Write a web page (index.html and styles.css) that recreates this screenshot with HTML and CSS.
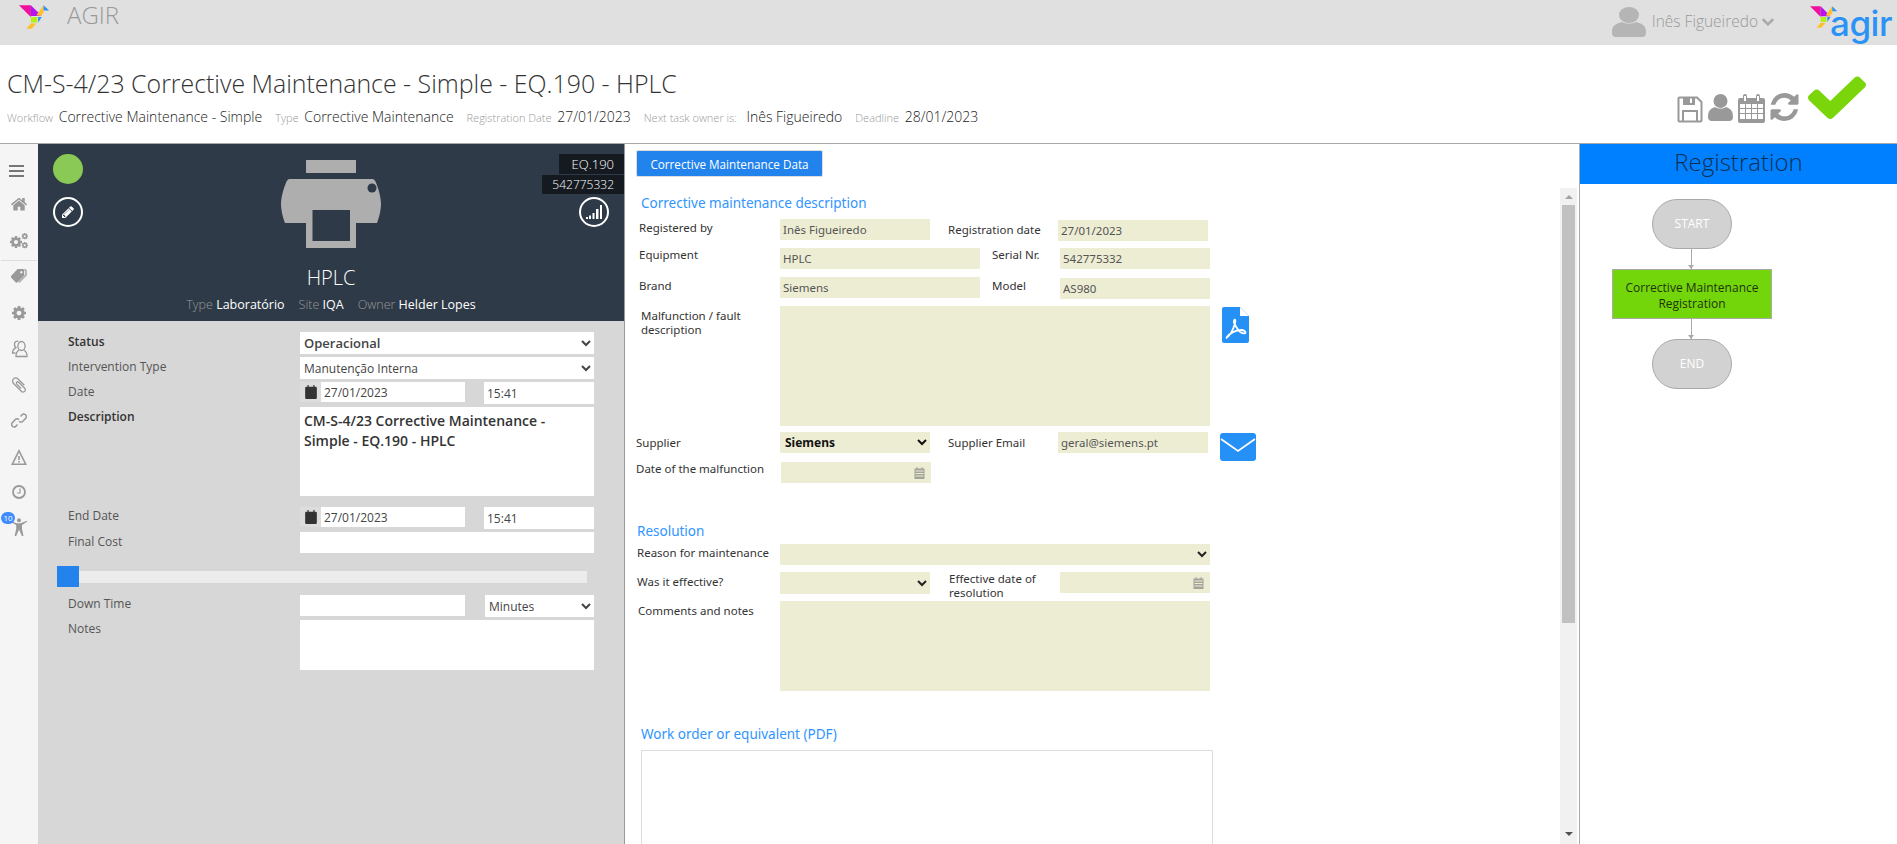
FILE: index.html
```
<!DOCTYPE html>
<html lang="pt">
<head>
<meta charset="utf-8">
<title>AGIR</title>
<link rel="stylesheet" href="styles.css">
</head>
<body>
<svg class="defs" aria-hidden="true">
  <symbol id="bird" viewBox="8 3 34 28">
    <polygon fill="#f0109c" points="8,4 21,4 21,17"/>
    <polygon fill="#b414f0" points="21,4 33,16 21,16"/>
    <polygon fill="#ffc02e" points="27,15 35,4 35,12 32,16"/>
    <polygon fill="#2a93f5" points="35,4 41,10 35,10"/>
    <polygon fill="#b4f014" points="21,17 28,17 28,23 21,23"/>
    <polygon fill="#2a93f5" points="29,17 33,17 29,23"/>
    <polygon fill="#ffc02e" points="16,30 21,24 27,24 22,30"/>
  </symbol>
  <symbol id="chev" viewBox="130 350 1540 1220"><path d="M1683 808l-742 741q-19 19-45 19t-45-19l-742-741q-19-19-19-45.5t19-45.5l166-165q19-19 45-19t45 19l531 531 531-531q19-19 45-19t45 19l166 165q19 19 19 45.5t-19 45.5z"/></symbol>
  <symbol id="home" viewBox="90 200 1610 1340"><path d="M1472 992v480q0 26-19 45t-45 19h-384v-384h-256v384h-384q-26 0-45-19t-19-45v-480q0-1 .5-3t.5-3l575-474 575 474q1 2 1 6zm223-69l-62 74q-8 9-21 11h-3q-13 0-21-7l-692-577-692 577q-12 8-24 7-13-2-21-11l-62-74q-8-10-7-23.5t11-21.5l719-599q32-26 76-26t76 26l244 204v-195q0-14 9-23t23-9h192q14 0 23 9t9 23v408l219 182q10 8 11 21.5t-7 23.5z"/></symbol>
  <symbol id="cog" viewBox="128 128 1536 1536"><path d="M1152 896q0-106-75-181t-181-75-181 75-75 181 75 181 181 75 181-75 75-181zm512-109v222q0 12-8 23t-20 13l-185 28q-19 54-39 91 35 50 107 138 10 12 10 25t-9 23q-27 37-99 108t-94 71q-12 0-26-9l-138-108q-44 23-91 38-16 136-29 186-7 28-36 28h-222q-14 0-24.5-8.5t-11.5-21.5l-28-184q-49-16-90-37l-141 107q-10 9-25 9-14 0-25-11-126-114-165-168-7-10-7-23 0-12 8-23 15-21 51-66.5t54-70.5q-27-50-41-99l-183-27q-13-2-21-12.5t-8-23.5v-222q0-12 8-23t19-13l186-28q14-46 39-92-40-57-107-138-10-12-10-24 0-10 9-23 26-36 98.5-107.5t94.5-71.5q13 0 26 10l138 107q44-23 91-38 16-136 29-186 7-28 36-28h222q14 0 24.5 8.5t11.5 21.5l28 184q49 16 90 37l142-107q9-9 24-9 13 0 25 10 129 119 165 170 7 8 7 22 0 12-8 23-15 21-51 66.5t-54 70.5q26 50 41 98l183 28q13 2 21 12.5t8 23.5z"/></symbol>
  <symbol id="clip" viewBox="200 130 1400 1530"><path d="M1596 1385q0 117-79 196t-196 79q-135 0-235-100l-777-776q-113-115-113-271 0-159 110-270t269-111q158 0 273 113l605 606q10 10 10 22 0 16-30.5 46.5t-46.5 30.5q-13 0-23-10l-606-607q-79-77-181-77-106 0-179 75t-73 181q0 105 76 181l776 777q63 63 145 63 64 0 106-42t42-106q0-82-63-145l-581-581q-26-24-60-24-29 0-48 19t-19 48q0 32 25 59l410 410q10 10 10 22 0 16-31 47t-47 31q-12 0-22-10l-410-410q-63-61-63-149 0-82 57-139t139-57q88 0 149 63l581 581q100 98 100 235z"/></symbol>
  <symbol id="cal" viewBox="0 0 10 12"><path d="M2 0h1v1.500h4V0h1v1.500h1a1 1 0 0 1 1 1V11a1 1 0 0 1-1 1H1a1 1 0 0 1-1-1V2.500a1 1 0 0 1 1-1h1z"/></symbol>
  <symbol id="calm" viewBox="0 0 10 12"><path d="M2 0h1v1.500h4V0h1v1.500h2V12H0V1.500h2zM1 3.500v1h8v-1zM1 6v1h8V6zM1 8.500v1h8v-1z" fill-rule="evenodd"/></symbol>
</svg>

<header class="topbar">
  <svg class="logo-bird"><use href="#bird"/></svg>
  <span class="app-name">AGIR</span>
  <div class="spacer"></div>
  <svg class="top-user" viewBox="0 0 34 30"><ellipse cx="17" cy="8" rx="10" ry="8"/><path d="M0 25c0-6 3-8 10-10 4 2 10 2 14 0 7 2 10 4 10 10 0 3-1 5-4 5H4c-3 0-4-2-4-5z"/></svg>
  <span class="user-name">Inês Figueiredo</span>
  <svg class="top-chev"><use href="#chev"/></svg>
  <div class="brand">
    <svg class="brand-bird"><use href="#bird"/></svg>
    <span class="brand-text">agir</span>
  </div>
</header>

<section class="pagehead">
  <div class="headtext">
    <h1 class="title">CM-S-4/23 Corrective Maintenance - Simple - EQ.190 - HPLC</h1>
    <div class="metaline">
      <span class="metaitem"><small>Workflow</small> Corrective Maintenance - Simple</span>
      <span class="metaitem"><small>Type</small> Corrective Maintenance</span>
      <span class="metaitem"><small>Registration Date</small> 27/01/2023</span>
      <span class="metaitem metanext"><small>Next task owner is:</small> Inês Figueiredo</span>
      <span class="metaitem"><small>Deadline</small> 28/01/2023</span>
    </div>
  </div>
  <div class="actions">
    <svg class="act-save" viewBox="0 0 26 27"><path class="stroke2" d="M2.500 1.500H20L24.500 6v18.500a1 1 0 0 1-1 1h-21a1 1 0 0 1-1-1v-22a1 1 0 0 1 1-1z"/><path d="M6 2v7h12V2h-3v5h-2V2zM5 14h16v11h-2v-9H7v9H5z"/></svg>
    <svg class="act-user" viewBox="0 0 25 27"><ellipse cx="12.500" cy="7" rx="7" ry="7"/><path d="M0 23c0-6 2-8 7-10 3 2 8 2 11 0 5 2 7 4 7 10 0 2-1 4-4 4H4c-3 0-4-2-4-4z"/></svg>
    <svg class="act-cal" viewBox="0 0 27 29"><path d="M2 4h3V2a2 2 0 0 1 4 0v2h9V2a2 2 0 0 1 4 0v2h3a2 2 0 0 1 2 2v21a2 2 0 0 1-2 2H2a2 2 0 0 1-2-2V6a2 2 0 0 1 2-2z"/><path class="white" d="M2 10h5v4H2zM8 10h5v4H8zM14 10h5v4h-5zM20 10h5v4h-5zM2 15h5v4H2zM8 15h5v4H8zM14 15h5v4h-5zM20 15h5v4h-5zM2 20h5v5H2zM8 20h5v5H8zM14 20h5v5h-5zM20 20h5v5h-5zM6 2h2v5H6zM19 2h2v5h-2z"/></svg>
    <svg class="act-sync" viewBox="0 0 1536 1536"><path d="M1511 928q0 5-1 7-64 268-268 434.500t-478 166.500q-146 0-282.500-55t-243.500-157l-129 129q-19 19-45 19t-45-19-19-45v-448q0-26 19-45t45-19h448q26 0 45 19t19 45-19 45l-137 137q71 66 161 102t187 36q134 0 250-65t186-179q11-17 53-117 8-23 30-23h192q13 0 22.500 9.500t9.500 22.500zm25-800v448q0 26-19 45t-45 19h-448q-26 0-45-19t-19-45 19-45l138-138q-148-137-349-137-134 0-250 65t-186 179q-11 17-53 117-8 23-30 23h-199q-13 0-22.500-9.500t-9.500-22.500v-7q65-268 270-434.500t480-166.500q146 0 284 55.500t245 156.500l130-129q19-19 45-19t45 19 19 45z"/></svg>
    <svg class="act-check" viewBox="121 262 1550 1260" preserveAspectRatio="none"><path d="M1671 566q0 40-28 68l-724 724-136 136q-28 28-68 28t-68-28l-136-136-362-362q-28-28-28-68t28-68l136-136q28-28 68-28t68 28l294 295 656-657q28-28 68-28t68 28l136 136q28 28 28 68z"/></svg>
  </div>
</section>

<main class="workspace">
  <nav class="sidebar">
    <div class="navitem"><svg class="nav-menu" viewBox="0 0 15 12"><path d="M0 0h15v2H0zM0 5h15v2H0zM0 10h15v2H0z"/></svg></div>
    <div class="navitem"><svg class="nav-16"><use href="#home"/></svg></div>
    <div class="navitem"><svg class="nav-gears" viewBox="0 0 18 16"><use href="#cog" x="0" y="3" width="12" height="12"/><use href="#cog" x="11.500" y="0" width="6.500" height="6.500"/><use href="#cog" x="11.500" y="9" width="6.500" height="6.500"/></svg></div>
    <div class="navrule"></div>
    <div class="navitem"><svg class="nav-16" viewBox="0 0 17 15"><path d="M9 0h6a2 2 0 0 1 2 2v5l-8 8-1.500-1.500L15 6V3L14 1z" opacity=".7"/><path d="M7 0h5a2 2 0 0 1 2 2v5l-7.500 7.500a1 1 0 0 1-1.400 0L0 9a1 1 0 0 1 0-1.400zM11 2.200a1.300 1.300 0 1 0 .01 0z" fill-rule="evenodd"/></svg></div>
    <div class="navitem"><svg class="nav-14"><use href="#cog"/></svg></div>
    <div class="navitem"><svg class="nav-users outline" viewBox="0 0 17 18"><ellipse cx="10.500" cy="6" rx="3.600" ry="4.500"/><path d="M8 10c-1 1-3 2-3 5v1.500h11V15c0-3-2-4-3-5"/><path d="M7.500 1.500C5 .5 3 2.500 3.500 5c.2 1 .7 2 1.500 2.700-2 1-3.500 2.500-3.500 5.300h3"/></svg></div>
    <div class="navitem"><svg class="nav-clip"><use href="#clip"/></svg></div>
    <div class="navitem"><svg class="nav-link outline" viewBox="0 0 16 17"><path d="M9.500 4.500l1.800-2a2.600 2.600 0 0 1 3.600 3.600l-3 3.200a2.600 2.600 0 0 1-3.800 0"/><path d="M6.500 12.500l-1.800 2a2.600 2.600 0 0 1-3.600-3.600l3-3.200a2.600 2.600 0 0 1 3.800 0"/></svg></div>
    <div class="navitem"><svg class="nav-warn" viewBox="0 0 16 16"><path d="M8 0l8 16H0zM8 3.500L2.500 14.500h11zM7.200 7h1.600v4H7.200zM7.200 12h1.600v1.500H7.200z" fill-rule="evenodd"/></svg></div>
    <div class="navitem"><svg class="nav-14 outline thick" viewBox="0 0 14 14"><circle cx="7" cy="7" r="6"/><path d="M8 3.500V8H5" class="thin"/></svg></div>
    <div class="navitem navperson">
      <svg class="nav-person" viewBox="0 0 16 18"><circle cx="8" cy="2.300" r="2"/><path d="M0 3l5.500 2.200h4L16 2.800v1L11 7v4l1.500 7h-1.600L8 11.500 5.200 18H3.600L5.200 11V7L0 4z"/></svg>
      <span class="badge">10</span>
    </div>
  </nav>

  <aside class="assetpane">
    <div class="asset">
      <div class="asset-left">
        <span class="status-dot"></span>
        <span class="ring"><svg class="ring-pen" viewBox="0 0 1792 1792"><path d="M491 1536l91-91-235-235-91 91v107h128v128h107zm523-928q0-22-22-22-10 0-17 7l-542 542q-7 7-7 17 0 22 22 22 10 0 17-7l542-542q7-7 7-17zm-54-192l416 416-832 832h-416v-416zm683 96q0 53-37 90l-166 166-416-416 166-165q36-38 90-38 53 0 91 38l235 234q37 39 37 91z"/></svg></span>
      </div>
      <div class="asset-center">
        <svg class="printer" viewBox="0 0 100 88">
          <path class="pr-body" d="M25 0h50v13H25zM9 19H91c2.500 0 3.500 2 4.500 5C99 33 100 40 100 44 100 50 98 58 96 63H75V88H25V63H4C2 58 0 50 0 44 0 40 1 33 4.500 24 5.500 21 6.500 19 9 19z"/>
          <path class="pr-hole" d="M31.500 50H69v31H31.500z"/>
          <circle class="pr-hole" cx="91" cy="28" r="4.500"/>
        </svg>
        <div class="asset-name">HPLC</div>
        <div class="asset-meta"><span><i>Type</i> Laboratório</span><span><i>Site</i> IQA</span><span><i>Owner</i> Helder Lopes</span></div>
      </div>
      <div class="asset-right">
        <span class="tag tag-eq">EQ.190</span>
        <span class="tag tag-serial">542775332</span>
        <span class="ring ring-right"><svg class="ring-signal" viewBox="0 0 16 14"><path d="M0 12h2v2H0zM3 10.500h2V14H3zM6.500 8h2v6h-2zM10 4h2.500v10H10zM14 0h2v14h-2z"/></svg></span>
      </div>
    </div>
    <div class="taskform">
      <div class="frow h22">
        <label class="flabel strong">Status</label>
        <select class="wide strongval"><option>Operacional</option></select>
      </div>
      <div class="frow h22 mt3">
        <label class="flabel">Intervention Type</label>
        <select class="wide"><option>Manutenção Interna</option></select>
      </div>
      <div class="frow h22 mt3">
        <label class="flabel">Date</label>
        <span class="datepre"><svg class="cal-dark"><use href="#cal"/></svg></span>
        <input class="dateinput" value="27/01/2023">
        <input class="timeinput" value="15:41">
      </div>
      <div class="frow mt3">
        <label class="flabel strong">Description</label>
        <textarea class="descarea">CM-S-4/23 Corrective Maintenance - Simple - EQ.190 - HPLC</textarea>
      </div>
      <div class="frow h22 mt11">
        <label class="flabel up1">End Date</label>
        <span class="datepre"><svg class="cal-dark"><use href="#cal"/></svg></span>
        <input class="dateinput" value="27/01/2023">
        <input class="timeinput" value="15:41">
      </div>
      <div class="frow h21 mt3">
        <label class="flabel">Final Cost</label>
        <input class="wide">
      </div>
      <div class="slider"><span class="handle"></span></div>
      <div class="frow h22 mt12">
        <label class="flabel up1">Down Time</label>
        <input class="downinput">
        <select class="unitselect"><option>Minutes</option></select>
      </div>
      <div class="frow mt3">
        <label class="flabel up1">Notes</label>
        <textarea class="notesarea"></textarea>
      </div>
    </div>
  </aside>

  <section class="centerpane">
    <div class="tabs"><button class="tabbtn">Corrective Maintenance Data</button></div>
    <div class="scroller">
      <div class="sheet">
        <h2 class="sect in5 first">Corrective maintenance description</h2>
        <div class="row mt6">
          <label class="lab lab144 in3 p2">Registered by</label>
          <input class="fld w150" value="Inês Figueiredo">
          <label class="lab lab110 ml18 p4">Registration date</label>
          <input class="fld w150 down1" value="27/01/2023">
        </div>
        <div class="row mt7">
          <label class="lab lab144 in3">Equipment</label>
          <input class="fld w200" value="HPLC">
          <label class="lab lab68 ml12">Serial Nr.</label>
          <input class="fld w150" value="542775332">
        </div>
        <div class="row mt8">
          <label class="lab lab144 in3 p2">Brand</label>
          <input class="fld w200" value="Siemens">
          <label class="lab lab68 ml12 p2">Model</label>
          <input class="fld w150 down1" value="AS980">
        </div>
        <div class="row mt7">
          <label class="lab lab144 in5 p3">Malfunction / fault description</label>
          <textarea class="fld area120"></textarea>
          <svg class="pdficon" viewBox="0 0 27 36"><path class="blue" d="M2 0h16l9 9v25a2 2 0 0 1-2 2H2a2 2 0 0 1-2-2V2a2 2 0 0 1 2-2z"/><path class="white" d="M18 0l9 9h-9z"/><path class="pdfmark" d="M4 31c3-1 7-7 9-15 1-3 0-4-.8-3-.8 1 0 5 5 11 2 2 5 3 6 2s-1-3-4-3c-5 0-12 3-15 8z"/></svg>
        </div>
        <div class="row mt6 rowfix21">
          <label class="lab lab144 p4">Supplier</label>
          <div class="selwrap w150"><select class="fld fsel bold"><option>Siemens</option></select></div>
          <label class="lab lab110 ml18 p4">Supplier Email</label>
          <input class="fld w150" value="geral@siemens.pt">
          <svg class="mailicon" viewBox="0 0 36 28"><rect class="blue" width="36" height="28" rx="3"/><path class="mailflap" d="M1 6l17 12L35 6"/></svg>
        </div>
        <div class="row mt9">
          <label class="lab lab145">Date of the malfunction</label>
          <div class="fld w150 datefld"><svg class="cal-soft"><use href="#calm"/></svg></div>
        </div>
        <h2 class="sect in1 mt38">Resolution</h2>
        <div class="row mt3">
          <label class="lab lab144 in1 p2">Reason for maintenance</label>
          <select class="fld fsel wfull"><option></option></select>
        </div>
        <div class="row mt7 rowfix22">
          <label class="lab lab144 in1 p3">Was it effective?</label>
          <div class="selwrap w150"><select class="fld fsel h22f"><option></option></select></div>
          <label class="lab lab111 ml19 two">Effective date of resolution</label>
          <div class="fld w150 datefld"><svg class="cal-soft"><use href="#calm"/></svg></div>
        </div>
        <div class="row mt7">
          <label class="lab lab144 in2 p3">Comments and notes</label>
          <textarea class="fld area90"></textarea>
        </div>
        <h2 class="sect in5 mt33">Work order or equivalent (PDF)</h2>
        <div class="pdfbox"></div>
      </div>
    </div>
    <div class="fakebar">
      <span class="bar-up"></span>
      <span class="bar-thumb"></span>
      <span class="bar-down"></span>
    </div>
  </section>

  <aside class="flowpane">
    <div class="flowhead">Registration</div>
    <div class="flowcanvas">
      <div class="pill node-start">START</div>
      <div class="edge edge-a"></div>
      <div class="stepbox">Corrective Maintenance Registration</div>
      <div class="edge edge-b"></div>
      <div class="pill node-end">END</div>
    </div>
  </aside>
</main>
</body>
</html>
```
FILE: styles.css
```
* { box-sizing: border-box; }
html, body { margin: 0; padding: 0; height: 844px; overflow: hidden; background: #fff; }
body { font-family: "Open Sans", sans-serif; font-size: 12px; color: #333; }
.defs { position: absolute; width: 0; height: 0; }
svg { display: block; fill: #999; }
.white { fill: #fff; }
.blue { fill: #2590f5; }
.stroke2 { fill: none; stroke: #999; stroke-width: 2; }
.outline { fill: none; stroke: #999; stroke-width: 1.300; }
.thick { stroke-width: 1.800; }
.thin { stroke-width: 1.200; }
.pdfmark { fill: none; stroke: #fff; stroke-width: 1.800; }
.mailflap { fill: none; stroke: #fff; stroke-width: 1.800; }
.pr-body { fill: #aeaeae; }
.pr-hole { fill: #2e3a47; }

.topbar { height: 45px; background: #e0e0e0; display: flex; align-items: flex-start; }
.logo-bird { width: 31px; height: 28px; margin: 3px 0 0 19px; }
.app-name { margin: 0 0 0 17px; font-size: 24px; font-weight: 300; line-height: 30px; color: #999; }
.spacer { flex: 1; }
.top-user { width: 34px; height: 30px; margin-top: 7px; fill: #b5b5b5; }
.user-name { margin: 9px 0 0 6px; font-size: 15.500px; font-weight: 300; line-height: 24px; color: #999; }
.top-chev { width: 12px; height: 9px; margin: 17px 0 0 4px; fill: #aaa; }
.brand { position: relative; width: 87px; height: 45px; margin-left: 36px; }
.brand-bird { position: absolute; left: 0; top: 4px; width: 28px; height: 26px; }
.brand-text { position: absolute; left: 20px; top: 1px; font-family: "Inter", sans-serif; font-size: 35px; line-height: 44px; font-weight: 500; letter-spacing: -.5px; color: #2a93f5; }

.pagehead { height: 99px; display: flex; justify-content: space-between; border-bottom: 1px solid #aaa; }
.headtext { padding: 22px 0 0 7px; }
.title { margin: 0; font-size: 24.900px; font-weight: 300; line-height: 32px; color: #333; }
.metaline { display: flex; gap: 13px; margin-top: 7px; font-size: 14px; line-height: 22px; font-weight: 300; color: #222; }
.metaitem small { font-size: 11px; color: #999; margin-right: 2px; }
.metanext small { margin-right: 6px; }
.actions { display: flex; align-items: flex-end; padding: 0 31px 20px 0; gap: 5px; }
.act-save { width: 26px; height: 27px; }
.act-user { width: 25px; height: 27px; margin-bottom: 2px; }
.act-cal { width: 27px; height: 29px; }
.act-sync { width: 29px; height: 28px; margin-bottom: 2px; }
.act-check { width: 58px; height: 45px; margin: 0 0 4px 4px; fill: #7ad60a; }

.workspace { height: 700px; display: flex; }

.sidebar { width: 38px; flex: none; background: #f5f5f5; padding-top: 12px; display: grid; grid-template-columns: 1fr; grid-template-rows: 30px 36px 38px 1px 30px 44px 28px 44px 26px 48px 22px 46px; align-content: start; }
.navitem { display: flex; align-items: center; justify-content: center; }
.navrule { background: #ddd; margin: 0 1px; }
.nav-menu { width: 15px; height: 12px; margin-right: 5px; fill: #777; }
.nav-16 { width: 16px; height: 14px; }
.nav-14 { width: 14px; height: 14px; }
.nav-gears { width: 18px; height: 16px; }
.nav-users { width: 17px; height: 18px; }
.nav-clip { width: 14px; height: 16px; }
.nav-link { width: 16px; height: 17px; stroke-width: 1.500; }
.nav-warn { width: 16px; height: 16px; }
.navperson { position: relative; }
.nav-person { width: 16px; height: 18px; margin-top: 2px; }
.badge { position: absolute; left: 1px; top: 9px; width: 14px; height: 12px; border-radius: 6px; background: #3f8cff; color: #fff; font-size: 8px; line-height: 12px; text-align: center; }

.assetpane { width: 587px; flex: none; background: #d7d7d7; border-right: 1px solid #999; }
.asset { height: 177px; background: #2e3a47; display: grid; grid-template-columns: 1fr 100px 1fr; }
.asset-left { padding: 10px 0 0 15px; display: flex; flex-direction: column; gap: 13px; }
.status-dot { width: 30px; height: 30px; border-radius: 50%; background: #8bc956; }
.ring { width: 30px; height: 30px; border-radius: 50%; border: 2px solid #fff; display: flex; align-items: center; justify-content: center; }
.ring-pen { width: 14px; height: 14px; fill: #fff; }
.ring-signal { width: 16px; height: 14px; fill: #fff; }
.asset-center { padding-top: 16px; display: flex; flex-direction: column; align-items: center; white-space: nowrap; }
.printer { width: 100px; height: 88px; flex: none; }
.asset-name { margin-top: 16px; font-size: 20px; font-weight: 300; line-height: 28px; color: #fff; }
.asset-meta { display: flex; gap: 14px; margin-top: 4px; font-size: 12.500px; line-height: 18px; color: #fff; }
.asset-meta i { font-style: normal; font-weight: 300; color: #999; }
.asset-right { padding-top: 10px; display: flex; flex-direction: column; align-items: flex-end; }
.tag { background: #151a21; color: #fff; font-size: 12px; font-weight: 300; padding: 0 10px 0 0; display: block; text-align: right; }
.tag-eq { height: 20px; line-height: 20px; width: 65px; font-size: 13px; }
.tag-serial { height: 19px; line-height: 19px; margin-top: 1px; width: 82px; }
.ring-right { margin: 3px 15px 0 0; }

.taskform { padding: 11px 0 0 30px; }
.frow { display: flex; align-items: flex-start; }
.h22 { height: 22px; }
.h21 { height: 21px; }
.mt3 { margin-top: 3px; }
.mt8 { margin-top: 8px; }
.mt11 { margin-top: 11px; }
.mt12 { margin-top: 12px; }
.flabel { width: 232px; flex: none; line-height: 20px; font-size: 12px; color: #555; }
.flabel.strong { font-weight: 600; color: #333; }
.flabel.up1 { line-height: 18px; }
.taskform input, .taskform select, .taskform textarea { border: 0; border-radius: 0; outline: 0; background: #fff; font-family: "Open Sans", sans-serif; font-size: 12px; color: #444; margin: 0; }
.wide { width: 294px; height: 100%; padding: 0; }
.taskform .strongval { font-weight: 600; font-size: 13px; }
.datepre { width: 21px; height: 20px; background: #ddd; display: flex; align-items: center; justify-content: center; }
.cal-dark { width: 12px; height: 14px; fill: #333; }
.dateinput { width: 144px; height: 20px; padding: 0 0 0 3px; }
.taskform .timeinput { width: 110px; height: 22px; margin-left: 19px; padding: 0 0 0 3px; }
.taskform .descarea { width: 294px; height: 89px; padding: 4px 15px 4px 4px; resize: none; overflow: hidden; font-weight: 600; font-size: 14px; line-height: 20px; color: #333; }
.slider { position: relative; height: 12px; width: 530px; margin: 18px 0 0 -11px; background: #ececec; }
.handle { position: absolute; left: 0; top: -5px; width: 22px; height: 21px; background: #2383ec; }
.downinput { width: 165px; height: 21px; padding: 0; }
.taskform .unitselect { width: 109px; height: 22px; margin-left: 20px; padding: 0; }
.notesarea { width: 294px; height: 50px; resize: none; }

.centerpane { position: relative; flex: 1; min-width: 0; display: flex; flex-direction: column; background: #fff; }
.tabs { height: 44px; padding: 6px 0 0 11px; flex: none; }
.tabbtn { width: 187px; height: 27px; padding: 0; border: 1px solid #ddd; border-radius: 2px; background: #2383ec; color: #fff; font-family: "Open Sans", sans-serif; font-size: 11.700px; font-weight: 400; }
.scroller { flex: 1; min-height: 0; margin-right: 2px; overflow: hidden; }
.fakebar { position: absolute; top: 44px; right: 2px; bottom: 0; width: 17px; background: #f1f1f1; display: flex; flex-direction: column; align-items: center; }
.bar-up, .bar-down { width: 0; height: 0; border-left: 4px solid transparent; border-right: 4px solid transparent; }
.bar-up { border-bottom: 4px solid #a3a3a3; margin-top: 7px; }
.bar-thumb { width: 13px; height: 418px; margin-top: 6px; background: #c1c1c1; }
.bar-down { border-top: 4px solid #505050; margin-top: auto; margin-bottom: 8px; }

.sheet { height: 976px; padding: 5px 0 0 11px; font-family: "Noto Sans", sans-serif; }
.sect { margin: 0; font-family: "Noto Sans", sans-serif; font-size: 13.500px; font-weight: 400; line-height: 20px; color: #2f95ff; }
.in1 { padding-left: 1px; }
.in2 { padding-left: 2px; }
.in3 { padding-left: 3px; }
.in5 { padding-left: 5px; }
.mt6 { margin-top: 6px; }
.mt7 { margin-top: 7px; }
.mt9 { margin-top: 9px; }
.mt33 { margin-top: 33px; }
.mt38 { margin-top: 38px; }
.row { display: flex; align-items: flex-start; }
.rowfix21 { height: 21px; }
.rowfix22 { height: 22px; }
.lab { flex: none; font-size: 11.500px; line-height: 14px; color: #333; }
.lab144 { width: 144px; }
.lab145 { width: 145px; }
.lab110 { width: 110px; }
.lab111 { width: 111px; }
.lab68 { width: 68px; }
.ml12 { margin-left: 12px; }
.ml18 { margin-left: 18px; }
.ml19 { margin-left: 19px; }
.p2 { padding-top: 2px; }
.p3 { padding-top: 3px; }
.p4 { padding-top: 4px; }
.lab.two { padding-right: 10px; }
.fld { display: block; height: 21px; border: 0; border-radius: 0; outline: 0; margin: 0; background: #ededd4; font-family: "Noto Sans", sans-serif; font-size: 11.500px; color: #555; padding: 0 0 0 3px; }
.w150 { width: 150px; flex: none; }
.w200 { width: 200px; flex: none; }
.wfull { width: 430px; }
.down1 { margin-top: 1px; }
.area120 { width: 430px; height: 120px; resize: none; }
.area90 { width: 430px; height: 90px; resize: none; }
.selwrap .fsel { width: 100%; }
.fsel { color: #222; padding-left: 1px; }
.bold { font-weight: 700; color: #111; font-size: 12px; }
.h22f { height: 22px; }
.datefld { display: flex; align-items: center; justify-content: flex-end; padding: 0 6px 0 0; }
.cal-soft { width: 11px; height: 12px; fill: #a3a39a; }
.pdficon { width: 27px; height: 36px; margin: 1px 0 0 12px; }
.mailicon { width: 36px; height: 28px; margin: 1px 0 0 12px; }
.pdfbox { height: 400px; width: 572px; margin: 6px 0 0 5px; border: 1px solid #ddd; }

.flowpane { width: 318px; flex: none; border-left: 1px solid #aaa; }
.flowhead { height: 40px; background: #0080ff; text-align: center; font-size: 24px; font-weight: 300; line-height: 36px; color: #0e2f4f; }
.flowcanvas { position: relative; height: 660px; }
.pill { position: absolute; left: 72px; width: 80px; height: 50px; border: 1px solid #aaa; border-radius: 25px; background: #d2d2d2; color: #fff; font-size: 12px; line-height: 48px; text-align: center; }
.node-start { top: 15px; }
.node-end { top: 155px; }
.stepbox { position: absolute; left: 32px; top: 85px; width: 160px; height: 50px; padding: 10px 8px 0; border: 1px solid #aaa; background: #72d60a; color: #22330a; font-size: 12px; line-height: 16px; text-align: center; }
.edge { position: absolute; left: 111px; width: 1px; background: #aaa; }
.edge::after { content: ""; position: absolute; left: -3px; bottom: 0; border: 3.500px solid transparent; border-bottom: 0; border-top: 4px solid #aaa; }
.edge-a { top: 65px; height: 20px; }
.edge-b { top: 135px; height: 20px; }
```
